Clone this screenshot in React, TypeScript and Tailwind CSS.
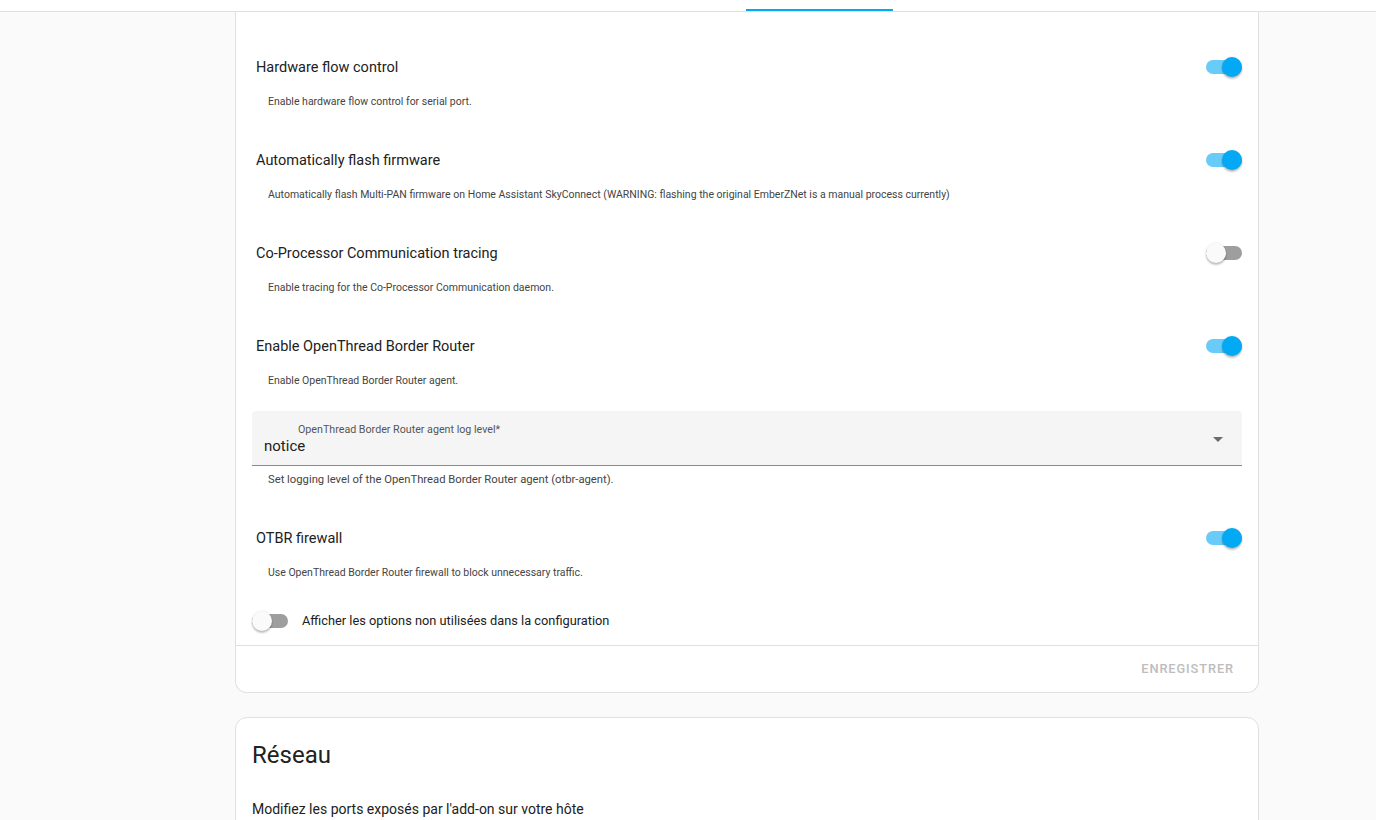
import React from "react";

const font = { fontFamily: "Roboto, 'Noto Sans', sans-serif" };

function Toggle({ on }: { on: boolean }) {
  return (
    <div className="relative w-9 h-5 shrink-0">
      <div
        className={
          "absolute left-0 right-0 top-[3px] h-[14px] rounded-full " +
          (on ? "bg-[#03a9f4]/60" : "bg-[#9e9e9e]")
        }
      />
      <div
        className={
          "absolute top-0 w-5 h-5 rounded-full shadow-[0_2px_2px_rgba(0,0,0,0.24),0_0_2px_rgba(0,0,0,0.12)] " +
          (on ? "left-4 bg-[#03a9f4]" : "left-0 bg-[#fafafa]")
        }
      />
    </div>
  );
}

function Row({ title, desc, on }: { title: string; desc: string; on: boolean }) {
  return (
    <>
      <div className="flex items-center justify-between h-12 pl-1">
        <span className="relative top-px text-[14.5px] text-[#212121]">{title}</span>
        <Toggle on={on} />
      </div>
      <div className="mt-[3px] pl-4 text-[10.5px] leading-4 text-[#444]">{desc}</div>
    </>
  );
}

export default function App() {
  return (
    <div className="min-h-[820px] bg-[#fafafa] overflow-hidden" style={font}>
      <div className="relative h-3 bg-white border-b border-[#e0e0e0]">
        <div className="absolute left-[746px] top-[9px] w-[147px] h-[2px] bg-[#03a9f4]" />
      </div>

      <div className="ml-[235px] w-[1024px] bg-white border-x border-b border-[#e0e0e0] rounded-b-xl">
        <div className="px-4 pt-[31px]">
          <div className="mb-[26px]">
            <Row title="Hardware flow control" desc="Enable hardware flow control for serial port." on />
          </div>
          <div className="mb-[26px]">
            <Row
              title="Automatically flash firmware"
              desc="Automatically flash Multi-PAN firmware on Home Assistant SkyConnect (WARNING: flashing the original EmberZNet is a manual process currently)"
              on
            />
          </div>
          <div className="mb-[26px]">
            <Row
              title="Co-Processor Communication tracing"
              desc="Enable tracing for the Co-Processor Communication daemon."
              on={false}
            />
          </div>
          <Row title="Enable OpenThread Border Router" desc="Enable OpenThread Border Router agent." on />

          <div className="mt-[22px] relative h-[55px] bg-[#f5f5f5] rounded-t border-b border-[#8a8a8a]">
            <div className="absolute left-[46px] top-[11px] text-[10.7px] leading-4 text-[#555]">
              OpenThread Border Router agent log level*
            </div>
            <div className="absolute left-3 top-[25px] text-[15px] leading-5 text-[#212121]">notice</div>
            <svg className="absolute right-[19px] top-[26px]" width="10" height="5" viewBox="0 0 10 5">
              <path d="M0 0 L10 0 L5 5 Z" fill="#6b6b6b" />
            </svg>
          </div>
          <div className="mt-[6px] pl-4 text-[11.25px] leading-4 text-[#444]">
            Set logging level of the OpenThread Border Router agent (otbr-agent).
          </div>

          <div className="mt-[26px]">
            <Row
              title="OTBR firewall"
              desc="Use OpenThread Border Router firewall to block unnecessary traffic."
              on
            />
          </div>

          <div className="mt-[16px] h-12 flex items-center gap-[14px]">
            <Toggle on={false} />
            <span className="text-[12.8px] text-[#212121]">Afficher les options non utilisées dans la configuration</span>
          </div>
        </div>
        <div className="border-t border-[#e0e0e0] h-[47px] flex items-center justify-end pr-6">
          <span className="text-[12.8px] font-medium tracking-[0.9px] text-[#bdbdbd]">ENREGISTRER</span>
        </div>
      </div>

      <div className="mt-[24px] ml-[235px] w-[1024px] bg-white border border-[#e0e0e0] rounded-t-xl h-[200px] px-4">
        <div className="pt-[21px] text-[24px] leading-8 text-[#212121]">Réseau</div>
        <div className="mt-[28px] text-[14px] leading-5 text-[#212121]">
          Modifiez les ports exposés par l'add-on sur votre hôte
        </div>
      </div>
    </div>
  );
}
